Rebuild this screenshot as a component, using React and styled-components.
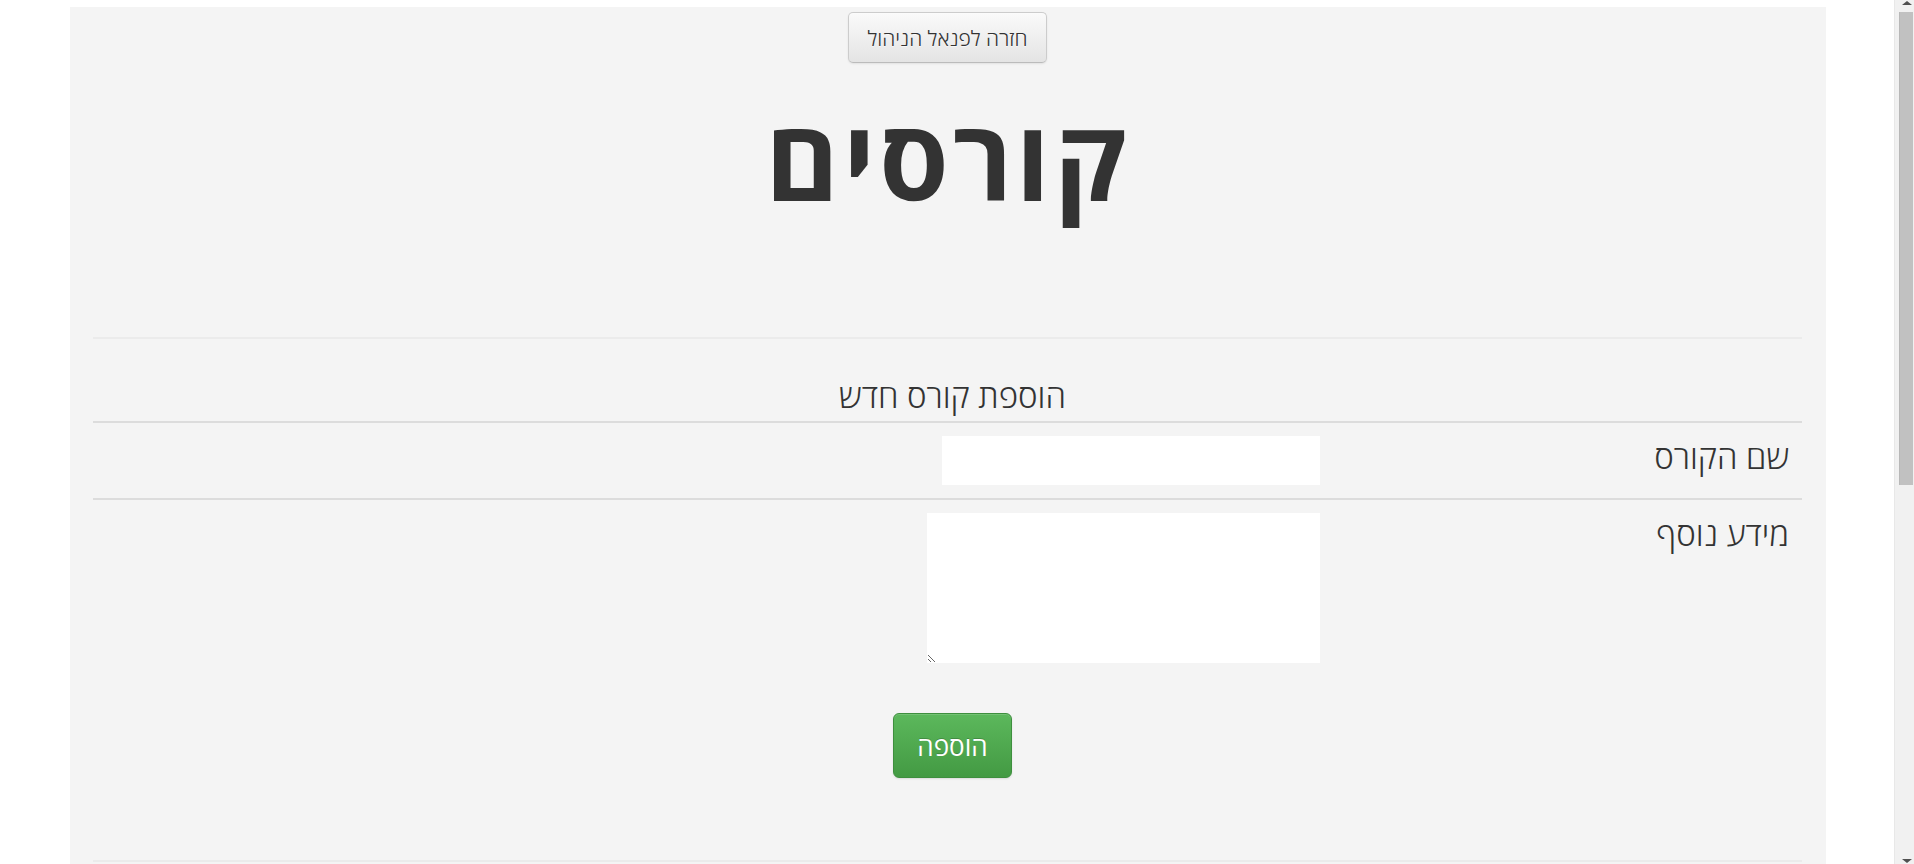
import React from 'react';
import styled, { createGlobalStyle } from 'styled-components';

const GlobalStyle = createGlobalStyle`
  html, body {
    margin: 0;
    padding: 0;
    background: #fff;
  }
  body {
    font-family: "Open Sans", "DejaVu Sans", sans-serif;
    color: #333;
  }
`;

const Page = styled.div`
  width: calc(100% - 20px);
`;

const Panel = styled.div`
  direction: rtl;
  width: 1756px;
  margin: 7px 0 0 70px;
  min-height: 1513px;
  background: #f4f4f4;
  padding: 0 24px 0 23px;
  box-sizing: border-box;
  font-weight: 300;
`;

const Top = styled.div`
  display: flex;
  justify-content: center;
  padding-top: 5px;
`;

const BackButton = styled.button`
  font-family: "Open Sans", "DejaVu Sans", sans-serif;
  font-size: 21px;
  font-weight: 300;
  color: #333;
  width: 199px;
  height: 51px;
  border: 1px solid #ccc;
  border-bottom-color: #bbb;
  border-radius: 5px;
  background: linear-gradient(#fafafa, #e4e4e4);
  box-shadow: inset 0 1px 0 rgba(255, 255, 255, 0.3), 0 1px 2px rgba(0, 0, 0, 0.08);
  text-shadow: 0 1px 1px rgba(255, 255, 255, 0.75);
  cursor: pointer;
`;

const Title = styled.h1`
  margin: 0;
  padding: 20px 0 0;
  height: 274px;
  box-sizing: border-box;
  text-align: center;
  font-size: 112px;
  font-weight: 700;
  line-height: 150px;
  color: #333;
  letter-spacing: 4px;
`;

const Divider = styled.hr`
  border: 0;
  border-top: 2px solid ${(p) => (p.$light ? '#ebebeb' : '#dcdcdc')};
  margin: 0;
`;

const SubTitle = styled.h3`
  margin: 0;
  height: 82px;
  text-align: center;
  font-size: 33px;
  font-weight: 300;
  line-height: 32px;
  padding: 41px 0 0 10px;
  box-sizing: border-box;
`;

const Row = styled.div`
  display: grid;
  grid-template-columns: 482px 1fr;
  align-items: start;
  padding: ${(p) => p.$pad || '13px 0'};
`;

const Label = styled.label`
  font-size: 33px;
  font-weight: 300;
  padding-right: 13px;
  line-height: 32px;
  padding-top: 5px;
`;

const Field = styled.input`
  width: ${(p) => p.$w}px;
  height: 49px;
  border: 0;
  background: #fff;
  box-sizing: border-box;
  padding: 0 8px;
  font-size: 18px;
  outline: none;
`;

const Area = styled.textarea`
  width: 393px;
  height: 150px;
  border: 0;
  background: #fff;
  box-sizing: border-box;
  padding: 6px 8px;
  font-size: 18px;
  outline: none;
  display: block;
`;

const Actions = styled.div`
  display: flex;
  justify-content: center;
  padding: 50px 0 82px 10px;
`;

const AddButton = styled.button`
  font-family: "Open Sans", "DejaVu Sans", sans-serif;
  width: 119px;
  height: 65px;
  font-size: 26px;
  font-weight: 400;
  color: #fff;
  border: 1px solid #3e8f3e;
  border-radius: 6px;
  background: linear-gradient(#5cb85c, #439a43);
  box-shadow: inset 0 1px 0 rgba(255, 255, 255, 0.15), 0 1px 2px rgba(0, 0, 0, 0.1);
  text-shadow: 0 -1px 0 rgba(0, 0, 0, 0.2);
  cursor: pointer;
`;

/* the window's scrollbar, drawn over the right edge */
const ScrollTrack = styled.div`
  position: fixed;
  top: 0;
  right: 0;
  width: 20px;
  height: 100vh;
  background: #f1f1f1;
  border-left: 1px solid #e8e8e8;
  box-sizing: border-box;
`;

const ScrollThumb = styled.div`
  position: absolute;
  top: 12px;
  left: 4px;
  right: 1px;
  height: 473px;
  background: #c1c1c1;
  border-left: 1px solid #b8b8b8;
`;

const Arrow = styled.div`
  position: absolute;
  left: 7px;
  width: 0;
  height: 0;
  border-left: 5px solid transparent;
  border-right: 5px solid transparent;
  ${(p) =>
    p.$down
      ? 'bottom: 1px; border-top: 4px solid #505050;'
      : 'top: 1px; border-bottom: 4px solid #505050;'}
`;

export default function App() {
  return (
    <>
      <GlobalStyle />
      <Page>
        <Panel>
          <Top>
            <BackButton>חזרה לפנאל הניהול</BackButton>
          </Top>
          <Title>קורסים</Title>
          <Divider $light />
          <SubTitle>הוספת קורס חדש</SubTitle>
          <Divider />
          <Row>
            <Label>שם הקורס</Label>
            <div>
              <Field type="text" $w={378} />
            </div>
          </Row>
          <Divider />
          <Row $pad="13px 0 0">
            <Label>מידע נוסף</Label>
            <div>
              <Area />
            </div>
          </Row>
          <Actions>
            <AddButton>הוספה</AddButton>
          </Actions>
          <Divider $light />
        </Panel>
      </Page>
      <ScrollTrack>
        <Arrow />
        <ScrollThumb />
        <Arrow $down />
      </ScrollTrack>
    </>
  );
}
